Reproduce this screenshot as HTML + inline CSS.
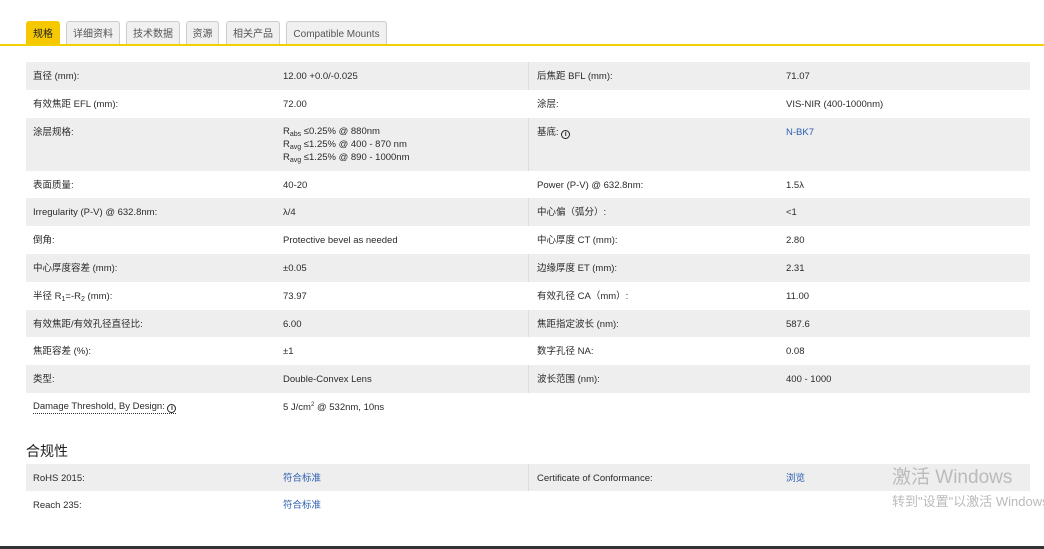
<!DOCTYPE html>
<html><head><meta charset="utf-8"><style>
*{margin:0;padding:0;box-sizing:border-box}
body{width:1044px;height:549px;background:#fff;position:relative;overflow:hidden;font-family:"Liberation Sans","Noto Sans CJK SC",sans-serif;font-size:9.5px;color:#2a2a2a}
.tab{position:absolute;top:21px;height:24px;border:1px solid #ccc;border-bottom:none;background:#f0f0f0;border-radius:3px 3px 0 0;font-size:10px;line-height:26px;text-align:center;color:#555}
.tab.a{background:#f5c800;border-color:#f5c800;color:#222}
.line{position:absolute;top:44px;left:0;width:1044px;height:2px;background:#f5d000}
.r{position:absolute;left:26px;width:1004px;height:28px}
.g{background:#eee}
.r>span{position:absolute;top:9px;white-space:nowrap;line-height:12px}
.c1{left:7px}.c2{left:257px}.c3{left:511px}.c4{left:760px}
.div{position:absolute;left:502px;top:0;bottom:0;width:1px;background:#ddd}
.lk{color:#2a5db0}
sub{font-size:7px;vertical-align:-2px;line-height:0}
sup{font-size:6px;vertical-align:4px;line-height:0}
.i{display:inline-block;width:9px;height:9px;border:1.3px solid #222;border-radius:50%;font-size:7px;line-height:7px;text-align:center;font-weight:bold;vertical-align:-1px}
.wm{position:absolute;color:#bbb;white-space:nowrap}
</style></head><body>
<div class="tab a" style="left:26px;width:34px">规格</div>
<div class="tab" style="left:66px;width:54px">详细资料</div>
<div class="tab" style="left:126px;width:54px">技术数据</div>
<div class="tab" style="left:186px;width:33px">资源</div>
<div class="tab" style="left:226px;width:54px">相关产品</div>
<div class="tab" style="left:286px;width:101px">Compatible Mounts</div>
<div class="line"></div>

<div class="r g" style="top:62px"><span class="c1">直径 (mm):</span><span class="c2">12.00 +0.0/-0.025</span><div class="div"></div><span class="c3">后焦距 BFL (mm):</span><span class="c4">71.07</span></div>
<div class="r" style="top:90px"><span class="c1">有效焦距 EFL (mm):</span><span class="c2">72.00</span><span class="c3">涂层:</span><span class="c4">VIS-NIR (400-1000nm)</span></div>
<div class="r g" style="top:118px;height:53px"><span class="c1">涂层规格:</span><span class="c2" style="line-height:13px;top:7px">R<sub>abs</sub> ≤0.25% @ 880nm<br>R<sub>avg</sub> ≤1.25% @ 400 - 870 nm<br>R<sub>avg</sub> ≤1.25% @ 890 - 1000nm</span><div class="div"></div><span class="c3">基底: <span class="i">i</span></span><span class="c4 lk">N-BK7</span></div>
<div class="r" style="top:171px;height:27px"><span class="c1">表面质量:</span><span class="c2">40-20</span><span class="c3">Power (P-V) @ 632.8nm:</span><span class="c4">1.5λ</span></div>
<div class="r g" style="top:198px"><span class="c1">Irregularity (P-V) @ 632.8nm:</span><span class="c2">λ/4</span><div class="div"></div><span class="c3">中心偏（弧分）:</span><span class="c4">&lt;1</span></div>
<div class="r" style="top:226px"><span class="c1">倒角:</span><span class="c2">Protective bevel as needed</span><span class="c3">中心厚度 CT (mm):</span><span class="c4">2.80</span></div>
<div class="r g" style="top:254px"><span class="c1">中心厚度容差 (mm):</span><span class="c2">±0.05</span><div class="div"></div><span class="c3">边缘厚度 ET (mm):</span><span class="c4">2.31</span></div>
<div class="r" style="top:282px"><span class="c1">半径 R<sub>1</sub>=-R<sub>2</sub> (mm):</span><span class="c2">73.97</span><span class="c3">有效孔径 CA（mm）:</span><span class="c4">11.00</span></div>
<div class="r g" style="top:310px;height:27px"><span class="c1">有效焦距/有效孔径直径比:</span><span class="c2">6.00</span><div class="div"></div><span class="c3">焦距指定波长 (nm):</span><span class="c4">587.6</span></div>
<div class="r" style="top:337px"><span class="c1">焦距容差 (%):</span><span class="c2">±1</span><span class="c3">数字孔径 NA:</span><span class="c4">0.08</span></div>
<div class="r g" style="top:365px"><span class="c1">类型:</span><span class="c2">Double-Convex Lens</span><div class="div"></div><span class="c3">波长范围 (nm):</span><span class="c4">400 - 1000</span></div>
<div class="r" style="top:393px"><span class="c1" style="top:8px;border-bottom:1px dotted #333">Damage Threshold, By Design: <span class="i">i</span></span><span class="c2">5 J/cm<sup>2</sup> @ 532nm, 10ns</span></div>

<div style="position:absolute;left:26px;top:441px;font-size:14px;line-height:20px;color:#222">合规性</div>
<div class="r g" style="top:464px;height:27px"><span class="c1">RoHS 2015:</span><span class="c2 lk">符合标准</span><div class="div"></div><span class="c3">Certificate of Conformance:</span><span class="c4 lk">浏览</span></div>
<div class="r" style="top:491px"><span class="c1">Reach 235:</span><span class="c2 lk">符合标准</span></div>

<div class="wm" style="left:892px;top:466px;font-size:19px;line-height:24px">激活 Windows</div>
<div class="wm" style="left:892px;top:494px;font-size:13px;line-height:16px">转到"设置"以激活 Windows</div>
<div style="position:absolute;left:0;top:546px;width:1044px;height:3px;background:#333"></div>
</body></html>
